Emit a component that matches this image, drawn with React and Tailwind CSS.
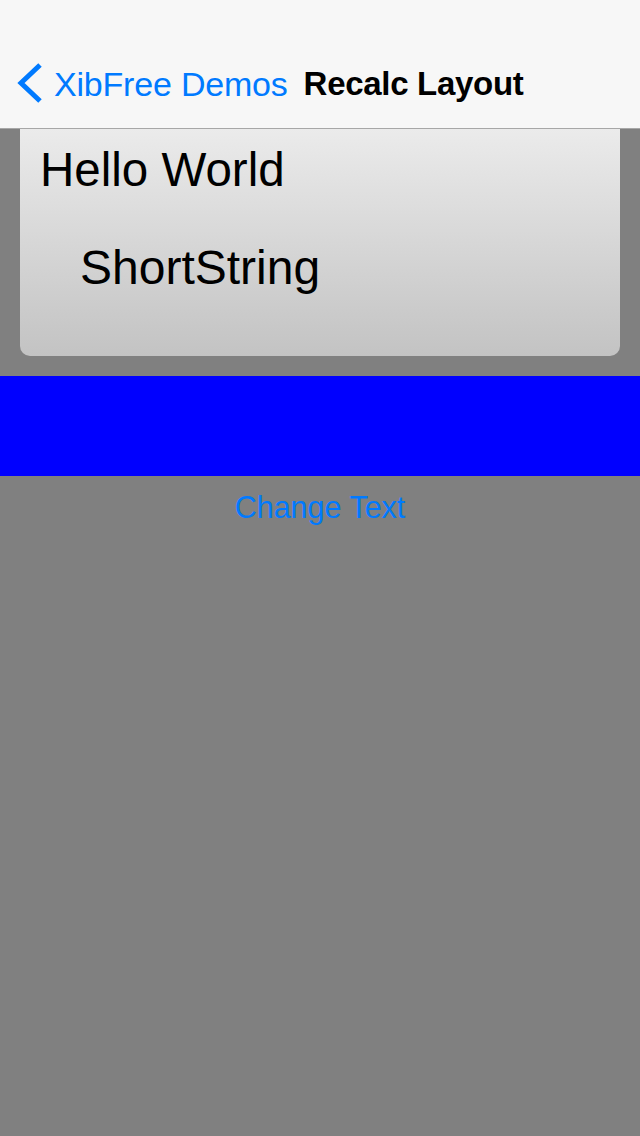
const App = () => {
  return (
    <div
      className="min-h-[1136px] w-[640px] bg-[#808080] flex flex-col"
      style={{ fontFamily: '"Liberation Sans", Arial, sans-serif' }}
    >
      {/* Nav bar */}
      <div className="h-[129px] bg-[#f7f7f7] border-b border-[#a7a7a7] flex flex-col">
        <div className="h-[40px]" />
        <div className="flex-1 flex items-center">
          <svg width="32" height="42" viewBox="0 0 32 42" className="ml-[12px] mr-[10px] mt-[-2px]">
            <path
              d="M28 3 L9 21 L28 39"
              fill="none"
              stroke="#007aff"
              strokeWidth="5"
              strokeLinecap="butt"
              strokeLinejoin="miter"
            />
          </svg>
          <span className="text-[#007aff] text-[34px] tracking-[-0.2px]">XibFree Demos</span>
          <span className="ml-[16px] text-black text-[33px] font-bold tracking-[-0.3px]">
            Recalc Layout
          </span>
        </div>
      </div>

      {/* Card */}
      <div className="mx-[20px] h-[227px] rounded-b-[10px] bg-gradient-to-b from-[#ebebeb] to-[#c3c3c3] flex flex-col">
        <div className="pl-[20px] pt-[11px] text-[47.5px] leading-[60px] text-black">
          Hello World
        </div>
        <div className="pl-[60px] pt-[38px] text-[48px] leading-[60px] text-black">
          ShortString
        </div>
      </div>

      {/* Blue bar */}
      <div className="mt-[20px] h-[100px] bg-[#0000ff]" />

      {/* Button */}
      <div className="flex justify-center pt-[11px]">
        <span className="text-[#007aff] text-[30.5px] leading-[40px]">Change Text</span>
      </div>
    </div>
  );
};

export default App;
